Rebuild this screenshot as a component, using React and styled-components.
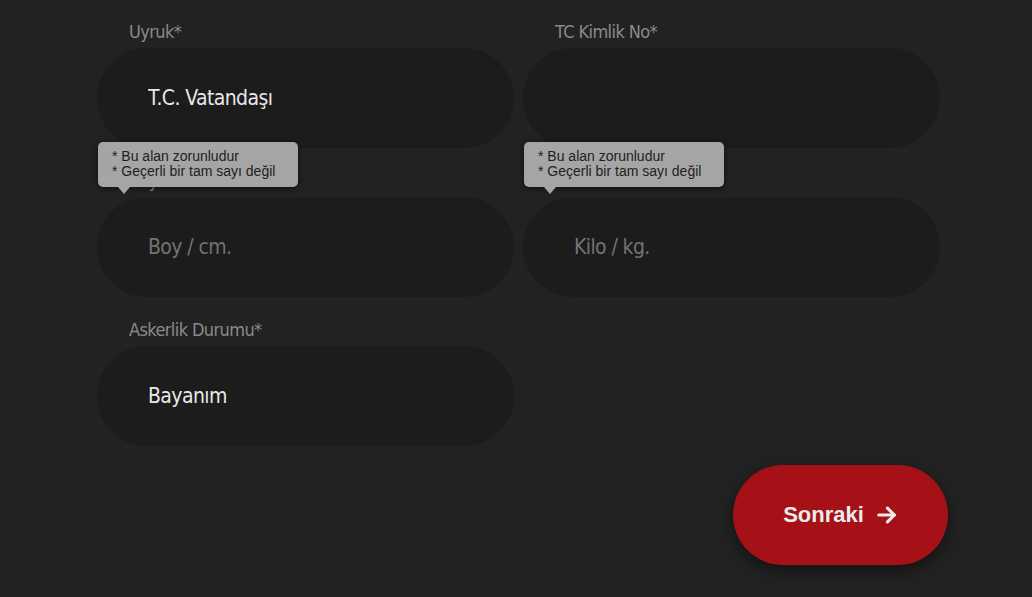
import { createGlobalStyle, styled } from "styled-components";

const GlobalStyle = createGlobalStyle`
  html, body {
    margin: 0;
    background: #222222;
  }
  * { box-sizing: border-box; }
`;

const Page = styled.div`
  width: 1032px;
  height: 597px;
  overflow: hidden;
  padding: 19px 0 0 97px;
  font-family: "Liberation Sans Narrow", "DejaVu Sans Condensed", "Roboto", sans-serif;
`;

const Grid = styled.div`
  display: grid;
  grid-template-columns: 417px 417px;
  column-gap: 9px;
  row-gap: 20px;
`;

const Field = styled.div`
  position: relative;
`;

const Label = styled.label`
  display: block;
  height: 26px;
  line-height: 26px;
  margin-bottom: 3px;
  padding-left: 32px;
  font-size: 18px;
  letter-spacing: -0.6px;
  color: #8a8a8a;
`;

const Input = styled.input`
  display: block;
  width: 100%;
  height: 100px;
  border: 0;
  outline: none;
  border-radius: 50px;
  background: #1c1c1c;
  padding: 0 0 0 51px;
  font-family: inherit;
  font-size: 21px;
  letter-spacing: -0.6px;
  color: #e8e8e8;
  &::placeholder {
    color: #737373;
  }
`;

const Tooltip = styled.div`
  position: absolute;
  top: -26px;
  left: 1px;
  width: 200px;
  height: 45px;
  padding: 7px 0 0 14px;
  background: #a5a5a5;
  border-radius: 5px;
  box-shadow: 0 1px 6px rgba(0, 0, 0, 0.55);
  font-family: "Liberation Sans", Arial, sans-serif;
  font-size: 14px;
  line-height: 15px;
  color: #1e1e1e;
  z-index: 2;
  &::after {
    content: "";
    position: absolute;
    left: 20px;
    bottom: -7px;
    border-left: 6px solid transparent;
    border-right: 6px solid transparent;
    border-top: 7px solid #a5a5a5;
  }
`;

const Actions = styled.div`
  display: flex;
  justify-content: flex-end;
  width: 851px;
  margin-top: 19px;
`;

const NextButton = styled.button`
  display: flex;
  align-items: center;
  justify-content: center;
  gap: 12px;
  width: 215px;
  height: 100px;
  border: 0;
  border-radius: 50px;
  background: #a51116;
  color: #ececec;
  font-family: "Liberation Sans", Arial, sans-serif;
  font-weight: bold;
  font-size: 22px;
  box-shadow: 0 6px 16px rgba(0, 0, 0, 0.45);
  cursor: pointer;
  svg {
    width: 22px;
    height: 22px;
  }
`;

function ArrowRight() {
  return (
    <svg viewBox="0 0 24 24" fill="none" stroke="currentColor" strokeWidth="3.4" strokeLinecap="round" strokeLinejoin="round">
      <path d="M3 12h17" />
      <path d="M12.5 4.5 20 12l-7.5 7.5" />
    </svg>
  );
}

function ErrorTip() {
  return (
    <Tooltip>
      * Bu alan zorunludur
      <br />
      * Geçerli bir tam sayı değil
    </Tooltip>
  );
}

export default function App() {
  return (
    <Page>
      <GlobalStyle />
      <Grid>
        <Field>
          <Label>Uyruk*</Label>
          <Input defaultValue="T.C. Vatandaşı" readOnly />
        </Field>
        <Field>
          <Label>TC Kimlik No*</Label>
          <Input />
        </Field>
        <Field>
          <ErrorTip />
          <Label>Boy*</Label>
          <Input placeholder="Boy / cm." />
        </Field>
        <Field>
          <ErrorTip />
          <Label>Kilo*</Label>
          <Input placeholder="Kilo / kg." />
        </Field>
        <Field>
          <Label>Askerlik Durumu*</Label>
          <Input defaultValue="Bayanım" readOnly />
        </Field>
      </Grid>
      <Actions>
        <NextButton>
          Sonraki <ArrowRight />
        </NextButton>
      </Actions>
    </Page>
  );
}
